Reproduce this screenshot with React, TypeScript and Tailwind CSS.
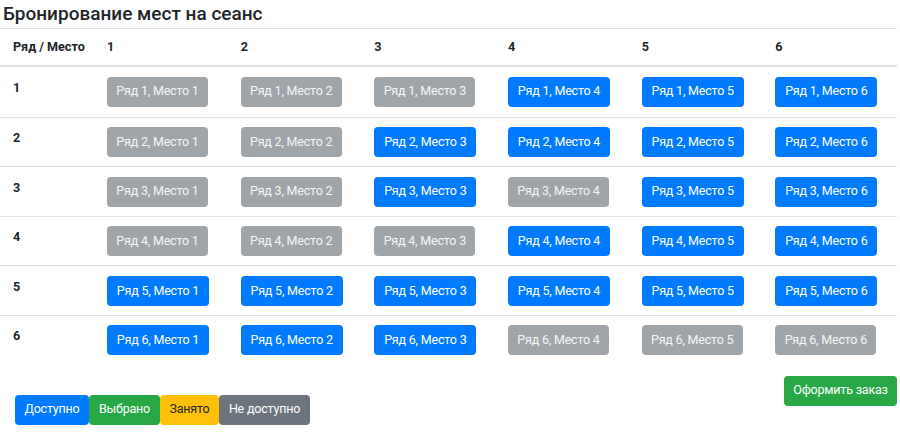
const taken: Record<number, number[]> = {
  1: [1, 2, 3],
  2: [1, 2],
  3: [1, 2, 4],
  4: [1, 2, 3],
  5: [],
  6: [4, 5, 6],
};

const rows = [1, 2, 3, 4, 5, 6];
const seats = [1, 2, 3, 4, 5, 6];

const Seat = ({ row, seat }: { row: number; seat: number }) => {
  const busy = taken[row].includes(seat);
  return (
    <button
      className={
        busy
          ? "w-[101px] h-[30px] rounded-[4px] bg-[#a0a5aa] text-[#f4f5f6] text-[12.5px] tracking-[-0.2px] cursor-default"
          : "w-[102px] h-[30px] rounded-[4px] bg-[#007bff] text-white text-[12.5px] tracking-[-0.2px] cursor-pointer"
      }
    >
      Ряд {row}, Место {seat}
    </button>
  );
};

const App = () => {
  return (
    <div className="w-[900px] h-[435px] bg-white text-[#212529] font-['Roboto','Open_Sans',sans-serif] overflow-hidden">
      <h4 className="pl-[3px] h-[28px] text-[19px] font-medium leading-[28px]">Бронирование мест на сеанс</h4>
      <div className="w-[897px]">
        <div className="grid grid-cols-[95px_repeat(6,1fr)] border-t border-b-2 border-[#dee2e6] h-[39px] items-center text-[12.6px] font-bold">
          <div className="pl-[13px]">Ряд / Место</div>
          {seats.map((s) => (
            <div key={s} className="pl-[12px]">{s}</div>
          ))}
        </div>
        {rows.map((r) => (
          <div
            key={r}
            className={
              "grid grid-cols-[95px_repeat(6,1fr)] h-[49.6px] pt-[9.5px] " +
              (r > 1 ? "border-t border-[#dee2e6]" : "")
            }
          >
            <div className="pl-[13px] text-[12.6px] font-bold leading-[21px]">{r}</div>
            {seats.map((s) => (
              <div key={s} className="pl-[12px]">
                <Seat row={r} seat={s} />
              </div>
            ))}
          </div>
        ))}
        <div className="flex justify-between items-start mt-[11px] text-[12.5px] tracking-[-0.2px]">
          <div className="flex mt-[19px] pl-[15px]">
            <span className="h-[30px] w-[74px] flex items-center justify-center rounded-[4px] bg-[#007bff] text-white">Доступно</span>
            <span className="h-[30px] w-[71px] flex items-center justify-center rounded-[4px] bg-[#28a745] text-white">Выбрано</span>
            <span className="h-[30px] w-[59px] flex items-center justify-center rounded-[4px] bg-[#ffc107] text-[#212529]">Занято</span>
            <span className="h-[30px] w-[91px] flex items-center justify-center rounded-[4px] bg-[#6c757d] text-white">Не доступно</span>
          </div>
          <button className="h-[30px] w-[113px] rounded-[4px] bg-[#28a745] text-white cursor-pointer">Оформить заказ</button>
        </div>
      </div>
    </div>
  );
};

export default App;
